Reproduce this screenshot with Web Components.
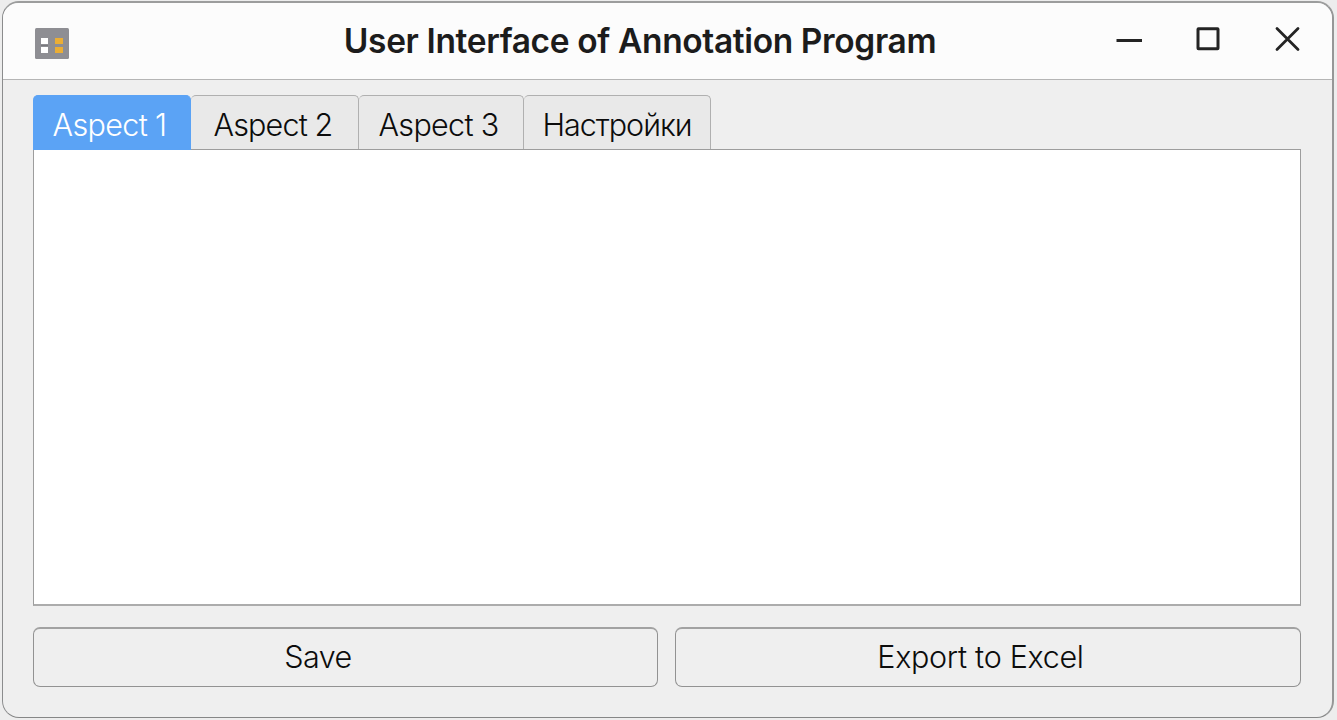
<!DOCTYPE html>
<html lang="en">
<head>
<meta charset="UTF-8">
<title>User Interface of Annotation Program</title>
<style>
  html, body {
    margin: 0;
    height: 100%;
  }
  body {
    background: #ededed;
    font-family: Inter, "Liberation Sans", sans-serif;
    overflow: hidden;
  }
</style>
</head>
<body>
<app-window title-text="User Interface of Annotation Program">
  <tab-bar slot="tabs">
    <tab-item active style="--width: 158px; --shift: 4px; --tracking: -0.65px">Aspect 1</tab-item>
    <tab-item style="--width: 168px; --shift: 3px">Aspect 2</tab-item>
    <tab-item style="--width: 165px; --shift: 5px; --tracking: -0.7px">Aspect 3</tab-item>
    <tab-item style="--width: 187px; --tracking: -1px">Настройки</tab-item>
  </tab-bar>
  <push-button slot="actions" style="--shift: 55px; --tracking: -0.5px">Save</push-button>
  <push-button slot="actions" style="--shift: 15px">Export to Excel</push-button>
</app-window>

<script>
// Main window: title bar, tabs, page and bottom actions
class AppWindow extends HTMLElement {
  constructor() {
    super();
    this.attachShadow({ mode: 'open' });
  }

  connectedCallback() {
    this.render();
  }

  get titleText() {
    return this.getAttribute('title-text') || '';
  }

  render() {
    this.shadowRoot.innerHTML = `
      <style>
        :host {
          display: block;
          box-sizing: border-box;
          height: 720px;
          padding: 1px 3px 2px 2px;
        }
        .frame {
          box-sizing: border-box;
          height: 100%;
          display: flex;
          flex-direction: column;
          border-style: solid;
          border-width: 2px 2px 1px 1px;
          border-color: #9c9d9d #969797 #868787 #8b8c8d;
          border-radius: 17px;
          background: #efefef;
          overflow: hidden;
        }
        .content {
          flex: 1;
          display: flex;
          flex-direction: column;
          padding: 15px 31px 30px 30px;
        }
        .page {
          flex: 1;
          background: #fff;
          border: 1px solid #9d9d9d;
          border-bottom: 2px solid #acacac;
          margin-top: -1px;
        }
        .actions {
          display: grid;
          grid-template-columns: 625px 1fr;
          gap: 17px;
          height: 60px;
          margin-top: 21px;
        }
      </style>
      <div class="frame">
        <title-bar>${this.titleText}</title-bar>
        <div class="content">
          <slot name="tabs"></slot>
          <div class="page"></div>
          <div class="actions"><slot name="actions"></slot></div>
        </div>
      </div>
    `;
  }
}

// Title bar with the app icon and the window controls
class TitleBar extends HTMLElement {
  constructor() {
    super();
    this.attachShadow({ mode: 'open' });
  }

  connectedCallback() {
    this.shadowRoot.innerHTML = `
      <style>
        :host {
          box-sizing: border-box;
          display: grid;
          grid-template-columns: 200px 1fr 200px;
          height: 77px;
          padding: 0 31px 0 32px;
          background: #fcfcfc;
          border-bottom: 1px solid #b5b5b5;
        }
        svg {
          display: block;
        }
        .icon {
          margin-top: 25px;
        }
        .title {
          text-align: center;
          font-size: 33.5px;
          font-weight: 570;
          line-height: 40px;
          margin-top: 18px;
          letter-spacing: -0.37px;
          color: #1c1c1c;
          white-space: nowrap;
          padding-right: 56px;
        }
        .controls {
          display: flex;
          justify-content: flex-end;
          gap: 51px;
          margin-top: 22px;
        }
      </style>
      <svg class="icon" width="34" height="31" viewBox="0 0 34 31">
        <rect width="34" height="31" rx="1.5" fill="#8e8e93"/>
        <path d="M6 10h7v6H6zM6 19h7v6H6z" fill="#fff"/>
        <path d="M20 10h8v6h-8zM20 19h8v6h-8z" fill="#ebae35"/>
        <path d="M6 17.5h7" stroke="#77777b"/>
      </svg>
      <div class="title"><slot></slot></div>
      <div class="controls">
        <svg width="28" height="30" viewBox="0 0 28 30" stroke="#242424" fill="none">
          <path d="M1.5 15.5h25.5" stroke-width="3"/>
        </svg>
        <svg width="28" height="30" viewBox="0 0 28 30" stroke="#242424" fill="none">
          <rect x="4" y="3.7" width="20" height="20" rx="0.5" stroke-width="3"/>
        </svg>
        <svg width="28" height="30" viewBox="0 0 28 30" stroke="#242424" fill="none">
          <path d="M4 3.5l21 21M25 3.5l-21 21" stroke-width="2.8" stroke-linecap="round"/>
        </svg>
      </div>
    `;
  }
}

class TabBar extends HTMLElement {
  constructor() {
    super();
    this.attachShadow({ mode: 'open' });
  }

  connectedCallback() {
    this.shadowRoot.innerHTML = `
      <style>
        :host {
          display: flex;
          height: 55px;
        }
      </style>
      <slot></slot>
    `;
  }
}

class TabItem extends HTMLElement {
  constructor() {
    super();
    this.attachShadow({ mode: 'open' });
  }

  connectedCallback() {
    this.shadowRoot.innerHTML = `
      <style>
        :host {
          box-sizing: border-box;
          display: flex;
          justify-content: center;
          width: var(--width);
          padding-right: var(--shift, 0);
          border: 1px solid #b0b0b0;
          border-left: 0;
          border-bottom-color: #9d9d9d;
          border-radius: 5px 5px 0 0;
          background: #e9e9e9;
          color: #0c0c0c;
          font-size: 30.5px;
          font-weight: 330;
          line-height: 38px;
          letter-spacing: var(--tracking, -0.85px);
          padding-top: 10px;
          white-space: nowrap;
        }
        :host([active]) {
          background: #5ba3f5;
          border-color: #5ba3f5;
          color: #fff;
          z-index: 1;
        }
      </style>
      <slot></slot>
    `;
  }
}

class PushButton extends HTMLElement {
  constructor() {
    super();
    this.attachShadow({ mode: 'open' });
  }

  connectedCallback() {
    this.shadowRoot.innerHTML = `
      <style>
        :host {
          display: block;
        }
        button {
          box-sizing: border-box;
          width: 100%;
          height: 100%;
          margin: 0;
          padding: 0 var(--shift, 0) 2px 0;
          border: 1px solid #929292;
          border-top: 2px solid #a2a2a2;
          border-radius: 7px;
          background: #efefef;
          color: #0c0c0c;
          font-family: inherit;
          font-size: 30.5px;
          font-weight: 330;
          letter-spacing: var(--tracking, -0.3px);
        }
      </style>
      <button type="button"><slot></slot></button>
    `;
  }
}

customElements.define('app-window', AppWindow);
customElements.define('title-bar', TitleBar);
customElements.define('tab-bar', TabBar);
customElements.define('tab-item', TabItem);
customElements.define('push-button', PushButton);
</script>
</body>
</html>
